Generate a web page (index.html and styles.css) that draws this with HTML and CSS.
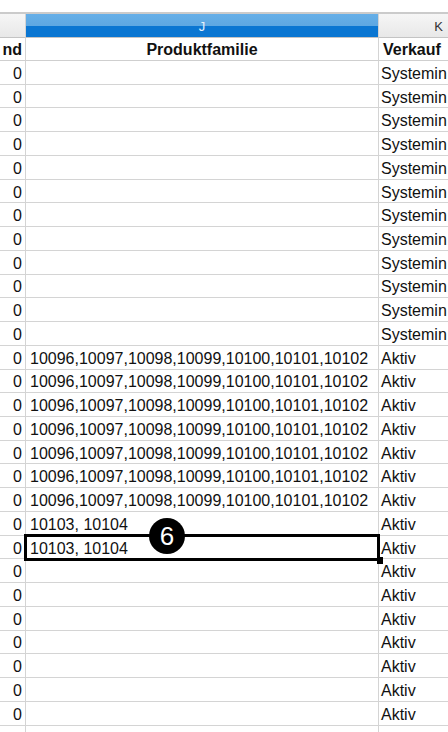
FILE: index.html
```html
<!DOCTYPE html>
<html lang="de">
<head>
<meta charset="utf-8">
<title>Tabelle</title>
<link rel="stylesheet" href="styles.css">
</head>
<body>
<div class="sheet">
  <div class="row colhead">
    <div class="cell ci"></div>
    <div class="cell cj">J</div>
    <div class="cell ck">K</div>
  </div>
  <div class="row head">
    <div class="cell i">nd</div>
    <div class="cell j">Produktfamilie</div>
    <div class="cell k">Verkauf</div>
  </div>
  <div class="row"><div class="cell i">0</div><div class="cell j"></div><div class="cell k">Systemin</div></div>
  <div class="row"><div class="cell i">0</div><div class="cell j"></div><div class="cell k">Systemin</div></div>
  <div class="row"><div class="cell i">0</div><div class="cell j"></div><div class="cell k">Systemin</div></div>
  <div class="row"><div class="cell i">0</div><div class="cell j"></div><div class="cell k">Systemin</div></div>
  <div class="row"><div class="cell i">0</div><div class="cell j"></div><div class="cell k">Systemin</div></div>
  <div class="row"><div class="cell i">0</div><div class="cell j"></div><div class="cell k">Systemin</div></div>
  <div class="row"><div class="cell i">0</div><div class="cell j"></div><div class="cell k">Systemin</div></div>
  <div class="row"><div class="cell i">0</div><div class="cell j"></div><div class="cell k">Systemin</div></div>
  <div class="row"><div class="cell i">0</div><div class="cell j"></div><div class="cell k">Systemin</div></div>
  <div class="row"><div class="cell i">0</div><div class="cell j"></div><div class="cell k">Systemin</div></div>
  <div class="row"><div class="cell i">0</div><div class="cell j"></div><div class="cell k">Systemin</div></div>
  <div class="row"><div class="cell i">0</div><div class="cell j"></div><div class="cell k">Systemin</div></div>
  <div class="row"><div class="cell i">0</div><div class="cell j">10096,10097,10098,10099,10100,10101,10102</div><div class="cell k">Aktiv</div></div>
  <div class="row"><div class="cell i">0</div><div class="cell j">10096,10097,10098,10099,10100,10101,10102</div><div class="cell k">Aktiv</div></div>
  <div class="row"><div class="cell i">0</div><div class="cell j">10096,10097,10098,10099,10100,10101,10102</div><div class="cell k">Aktiv</div></div>
  <div class="row"><div class="cell i">0</div><div class="cell j">10096,10097,10098,10099,10100,10101,10102</div><div class="cell k">Aktiv</div></div>
  <div class="row"><div class="cell i">0</div><div class="cell j">10096,10097,10098,10099,10100,10101,10102</div><div class="cell k">Aktiv</div></div>
  <div class="row"><div class="cell i">0</div><div class="cell j">10096,10097,10098,10099,10100,10101,10102</div><div class="cell k">Aktiv</div></div>
  <div class="row"><div class="cell i">0</div><div class="cell j">10096,10097,10098,10099,10100,10101,10102</div><div class="cell k">Aktiv</div></div>
  <div class="row"><div class="cell i">0</div><div class="cell j">10103, 10104</div><div class="cell k">Aktiv</div></div>
  <div class="row active">
    <div class="cell i">0</div><div class="cell j">10103, 10104</div><div class="cell k">Aktiv</div>
    <div class="selbox"></div>
    <div class="handle"></div>
  </div>
  <div class="row"><div class="cell i">0</div><div class="cell j"></div><div class="cell k">Aktiv</div></div>
  <div class="row"><div class="cell i">0</div><div class="cell j"></div><div class="cell k">Aktiv</div></div>
  <div class="row"><div class="cell i">0</div><div class="cell j"></div><div class="cell k">Aktiv</div></div>
  <div class="row"><div class="cell i">0</div><div class="cell j"></div><div class="cell k">Aktiv</div></div>
  <div class="row"><div class="cell i">0</div><div class="cell j"></div><div class="cell k">Aktiv</div></div>
  <div class="row"><div class="cell i">0</div><div class="cell j"></div><div class="cell k">Aktiv</div></div>
  <div class="row"><div class="cell i">0</div><div class="cell j"></div><div class="cell k">Aktiv</div></div>
  <div class="row"><div class="cell i"></div><div class="cell j"></div><div class="cell k"></div></div>
  <div class="badge">6</div>
</div>
</body>
</html>
```
FILE: styles.css
```css
html, body {
  margin: 0;
  padding: 0;
  background: #fff;
}
body {
  font-family: "Liberation Sans", Arial, sans-serif;
  color: #111;
  overflow: hidden;
}
.sheet {
  position: relative;
  width: 448px;
  height: 732px;
  overflow: hidden;
  padding-top: 12px;
  box-sizing: border-box;
}
.row {
  display: grid;
  grid-template-columns: 26px 353px 1fr;
  height: 23.74px;
}
.cell {
  box-sizing: border-box;
  border-right: 1px solid #d4d4d4;
  border-bottom: 1px solid #d4d4d4;
  overflow: hidden;
  white-space: nowrap;
  display: flex;
  align-items: center;
  font-size: 16px;
  padding-top: 3px;
}
.i {
  justify-content: flex-end;
  padding-right: 3px;
}
.j {
  padding-left: 4px;
}
.k {
  padding-left: 2px;
  border-right: none;
}
.colhead {
  height: 26px;
  border-top: 2px solid #cbcbcb;
  box-sizing: border-box;
}
.colhead .cell {
  font-size: 13px;
  justify-content: center;
  border-bottom-color: #c4c4c4;
  padding-top: 1px;
}
.ci, .ck {
  background: linear-gradient(#f6f6f6, #e8e8e8);
  color: #333;
}
.ck {
  border-right: none;
  justify-content: flex-start;
  padding-left: 50px;
}
.cj {
  background: linear-gradient(#66afe8 0%, #5ea8e2 50%, #0a76d2 52%, #0a76d2 100%);
  color: #e6f1fb;
}
.head {
  height: 23px;
}
.head .cell {
  font-weight: bold;
  border-bottom-color: #cfcfcf;
  padding-top: 1px;
}
.head .j {
  justify-content: center;
  padding-left: 0;
}
.head .k {
  padding-left: 4px;
}
.active {
  position: relative;
}
.selbox {
  position: absolute;
  left: 24px;
  top: -2px;
  width: 356px;
  height: 27px;
  border: 3px solid #000;
  box-sizing: border-box;
  pointer-events: none;
}
.handle {
  position: absolute;
  left: 377px;
  top: 21px;
  width: 6px;
  height: 7px;
  background: #000;
}
.badge {
  position: absolute;
  left: 149px;
  top: 518px;
  width: 36px;
  height: 36px;
  border-radius: 50%;
  background: #000;
  color: #fff;
  font-size: 26px;
  line-height: 37px;
  text-align: center;
}
```
